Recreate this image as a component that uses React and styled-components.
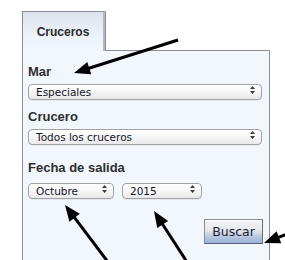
import React from 'react';
import styled, { createGlobalStyle } from 'styled-components';

const GlobalStyle = createGlobalStyle`
  html, body {
    margin: 0;
    padding: 0;
    background: #ffffff;
    overflow: hidden;
  }
  body {
    font-family: "Liberation Sans", Arial, sans-serif;
  }
`;

const Page = styled.div`
  position: relative;
  width: 285px;
  height: 260px;
  padding: 11px 0 0 22px;
  box-sizing: border-box;
  overflow: hidden;
`;

const Tab = styled.div`
  position: relative;
  z-index: 1;
  width: 80px;
  height: 39px;
  margin-bottom: -1px;
  display: flex;
  align-items: center;
  justify-content: center;
  border: 1px solid #868e9f;
  border-bottom: none;
  border-right: 2px solid #b4b8c0;
  box-shadow: 1px 0 0 #8a909c;
  background: linear-gradient(#dde2ea, #eef2f9 60%, #f2f6fd);
  font-size: 12px;
  font-weight: bold;
  color: #2b2b2b;
`;

const Panel = styled.div`
  width: 248px;
  min-height: 230px;
  padding: 13px 10px 0 5px;
  box-sizing: border-box;
  border: 1px solid #868e9f;
  border-bottom: none;
  background: #f2f6fd;
  display: flex;
  flex-direction: column;
`;

const Field = styled.div`
  display: flex;
  flex-direction: column;
  gap: ${(p) => p.$gap || 3}px;
  margin-bottom: ${(p) => p.$after || 0}px;
`;

const Label = styled.label`
  font-size: 13px;
  line-height: 15px;
  font-weight: bold;
  color: #2e2e2e;
`;

const Row = styled.div`
  display: flex;
  gap: 8px;
`;

const SelectWrap = styled.div`
  position: relative;
  width: ${(p) => p.$width || 234}px;
  height: 16px;
`;

const Select = styled.select`
  appearance: none;
  -webkit-appearance: none;
  width: 100%;
  height: 16px;
  margin: 0;
  padding: 0 0 0 7px;
  box-sizing: border-box;
  border: 1px solid #a3a3a3;
  border-radius: 4px;
  background: linear-gradient(#ffffff, #f6f6f6 50%, #e9e9e9);
  box-shadow: 0 1px 0 rgba(0, 0, 0, 0.06);
  font-family: "DejaVu Sans", "Liberation Sans", sans-serif;
  font-size: 10.5px;
  line-height: 14px;
  color: #15152a;
  outline: none;
`;

const Arrows = styled.svg`
  position: absolute;
  right: 7px;
  top: 4px;
  width: 5px;
  height: 8px;
  pointer-events: none;
`;

const Actions = styled.div`
  display: flex;
  justify-content: flex-end;
  margin: 22px -4px 0 0;
`;

const Button = styled.button`
  width: 59px;
  height: 25px;
  padding: 0;
  border: 1px solid #8c8c8c;
  border-right-color: #6d6d6d;
  border-bottom-color: #5e6570;
  background: linear-gradient(#f4f4f4, #e4e7ec 45%, #b4c5e0 75%, #9ab1d8);
  font-family: "DejaVu Sans", "Liberation Sans", sans-serif;
  font-size: 12.5px;
  color: #18202e;
  box-shadow: inset 0 1px 0 #ffffff;
`;

const Overlay = styled.svg`
  position: absolute;
  left: 0;
  top: 0;
  width: 285px;
  height: 260px;
  pointer-events: none;
  z-index: 5;
`;

function SelectBox({ width, value, options }) {
  return (
    <SelectWrap $width={width}>
      <Select defaultValue={value}>
        {options.map((o) => (
          <option key={o}>{o}</option>
        ))}
      </Select>
      <Arrows viewBox="0 0 5 8">
        <path d="M2.5 0 L5 3 L0 3 Z M0 5 L5 5 L2.5 8 Z" fill="#3a3a3a" />
      </Arrows>
    </SelectWrap>
  );
}

function Arrow({ tip, tail }) {
  const [tx, ty] = tip;
  const [sx, sy] = tail;
  const dx = tx - sx;
  const dy = ty - sy;
  const len = Math.hypot(dx, dy);
  const ux = dx / len;
  const uy = dy / len;
  const L = 16;
  const W = 6.5;
  const bx = tx - ux * L;
  const by = ty - uy * L;
  const pts = [
    [tx, ty],
    [bx - uy * W, by + ux * W],
    [bx + uy * W, by - ux * W],
  ]
    .map((p) => p.join(','))
    .join(' ');
  return (
    <g>
      <line x1={sx} y1={sy} x2={bx + ux * 2} y2={by + uy * 2} stroke="#000" strokeWidth="3" />
      <polygon points={pts} fill="#000" />
    </g>
  );
}

export default function App() {
  return (
    <Page>
      <GlobalStyle />
      <Tab>Cruceros</Tab>
      <Panel>
        <Field $after={11}>
          <Label>Mar</Label>
          <SelectBox value="Especiales" options={['Especiales']} />
        </Field>
        <Field $after={17}>
          <Label>Crucero</Label>
          <SelectBox value="Todos los cruceros" options={['Todos los cruceros']} />
        </Field>
        <Field $gap={6}>
          <Label>Fecha de salida</Label>
          <Row>
            <SelectBox width={86} value="Octubre" options={['Octubre']} />
            <SelectBox width={80} value="2015" options={['2015']} />
          </Row>
        </Field>
        <Actions>
          <Button>Buscar</Button>
        </Actions>
      </Panel>
      <Overlay viewBox="0 0 285 260">
        <Arrow tip={[74, 73]} tail={[178, 40]} />
        <Arrow tip={[65, 205]} tail={[108, 262]} />
        <Arrow tip={[154, 211]} tail={[187, 262]} />
        <Arrow tip={[264, 243]} tail={[290, 233]} />
      </Overlay>
    </Page>
  );
}
